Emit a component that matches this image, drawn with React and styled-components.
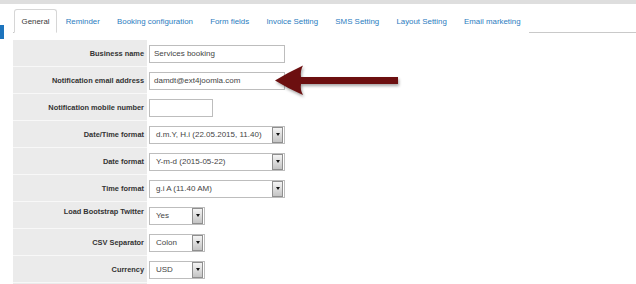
import React from 'react';
import styled, { createGlobalStyle } from 'styled-components';

const GlobalStyle = createGlobalStyle`
  html, body {
    margin: 0;
    padding: 0;
    background: #fff;
    font-family: "Liberation Sans", Arial, sans-serif;
  }
`;

const Page = styled.div`
  position: relative;
  width: 636px;
  height: 284px;
  overflow: hidden;
  background: #fff;
`;

const TopBar = styled.div`
  height: 4px;
  background: #dedede;
`;

const Body = styled.div`
  display: flex;
`;

const Gutter = styled.div`
  width: 13px;
  flex-shrink: 0;
`;

const Marker = styled.div`
  width: 4px;
  height: 14px;
  margin-top: 21px;
  background: #1d74bd;
`;

const Main = styled.div`
  flex: 1;
`;

const Tabs = styled.ul`
  display: flex;
  margin: 5px 0 0;
  padding: 0 0 0 1px;
  list-style: none;
  border-bottom: 1px solid #c9c9c9;
`;

const Tab = styled.li`
  height: 22px;
  display: flex;
  align-items: center;
  padding: 0 ${({ $active }) => ($active ? '6.5px' : '7.6px')};
  margin-bottom: -1px;
  font-size: 7.9px;
  color: ${({ $active }) => ($active ? '#3a3a3a' : '#2b7cc0')};
  background: #fff;
  border: 1px solid ${({ $active }) => ($active ? '#d6d6d6' : 'transparent')};
  border-bottom-color: ${({ $active }) => ($active ? '#fff' : 'transparent')};
  border-radius: 3px 3px 0 0;
  white-space: nowrap;
`;

const Form = styled.div`
  margin-top: 7px;
`;

const Row = styled.div`
  display: grid;
  grid-template-columns: 134px 1fr;
  height: 27px;
`;

const Label = styled.div`
  display: flex;
  justify-content: flex-end;
  align-items: ${({ $top }) => ($top ? 'flex-start' : 'center')};
  padding: ${({ $top }) => ($top ? '5px 3px 0 0' : '0 3px 0 0')};
  background: #ebebeb;
  border-bottom: 1px solid #f8f8f8;
  font-size: 7.4px;
  font-weight: bold;
  color: #333;
  white-space: nowrap;
`;

const Cell = styled.div`
  display: flex;
  align-items: center;
  padding-left: 2px;
`;

const TextInput = styled.div`
  box-sizing: border-box;
  width: ${({ $w }) => $w}px;
  height: 18px;
  padding-left: 4px;
  display: flex;
  align-items: center;
  border: 1px solid #bdbdbd;
  background: #fff;
  font-size: 8px;
  color: #444;
`;

const Select = styled.div`
  box-sizing: border-box;
  width: ${({ $w }) => $w}px;
  height: 18px;
  display: flex;
  align-items: center;
  border: 1px solid #bdbdbd;
  background: #fff;
  font-size: 8px;
  color: #444;
`;

const SelectText = styled.span`
  flex: 1;
  padding-left: 6px;
  white-space: nowrap;
`;

const SelectButton = styled.span`
  box-sizing: border-box;
  width: 11px;
  height: 16px;
  margin-right: 1px;
  display: flex;
  align-items: center;
  justify-content: center;
  border: 1px solid #8f8f8f;
  background: linear-gradient(#f4f4f4, #c4c4c4);

  &::after {
    content: '';
    border-left: 2.5px solid transparent;
    border-right: 2.5px solid transparent;
    border-top: 3px solid #111;
  }
`;

const Arrow = styled.svg`
  position: absolute;
  left: 0;
  top: 0;
  pointer-events: none;
  filter: drop-shadow(1px 2px 1.5px rgba(0, 0, 0, 0.35));
`;

const tabs = [
  'General',
  'Reminder',
  'Booking configuration',
  'Form fields',
  'Invoice Setting',
  'SMS Setting',
  'Layout Setting',
  'Email marketing',
];

const rows = [
  { label: 'Business name', input: 'Services booking', w: 136 },
  { label: 'Notification email address', input: 'damdt@ext4joomla.com', w: 136 },
  { label: 'Notification mobile number', input: '', w: 64 },
  { label: 'Date/Time format', select: 'd.m.Y, H.i (22.05.2015, 11.40)', w: 136 },
  { label: 'Date format', select: 'Y-m-d (2015-05-22)', w: 136 },
  { label: 'Time format', select: 'g.i A (11.40 AM)', w: 136 },
  { label: 'Load Bootstrap Twitter', select: 'Yes', w: 56, top: true },
  { label: 'CSV Separator', select: 'Colon', w: 56 },
  { label: 'Currency', select: 'USD', w: 56 },
  { label: '', input: '', w: 86 },
];

export default function App() {
  return (
    <Page>
      <GlobalStyle />
      <TopBar />
      <Body>
        <Gutter>
          <Marker />
        </Gutter>
        <Main>
          <Tabs>
            {tabs.map((t, i) => (
              <Tab key={t} $active={i === 0}>
                {t}
              </Tab>
            ))}
          </Tabs>
          <Form>
            {rows.map((r, i) => (
              <Row key={i}>
                <Label $top={r.top}>{r.label}</Label>
                <Cell>
                  {r.select !== undefined ? (
                    <Select $w={r.w}>
                      <SelectText>{r.select}</SelectText>
                      <SelectButton />
                    </Select>
                  ) : (
                    <TextInput $w={r.w}>{r.input}</TextInput>
                  )}
                </Cell>
              </Row>
            ))}
          </Form>
        </Main>
      </Body>
      <Arrow width="636" height="284" viewBox="0 0 636 284">
        <path
          d="M275 80.5 Q289 72 303 65.5 Q300 71 301 77 L398 77 L398 84 L301 84 Q300 90 303 95 Q289 89 275 80.5 Z"
          fill="#6c0f10"
        />
      </Arrow>
    </Page>
  );
}
